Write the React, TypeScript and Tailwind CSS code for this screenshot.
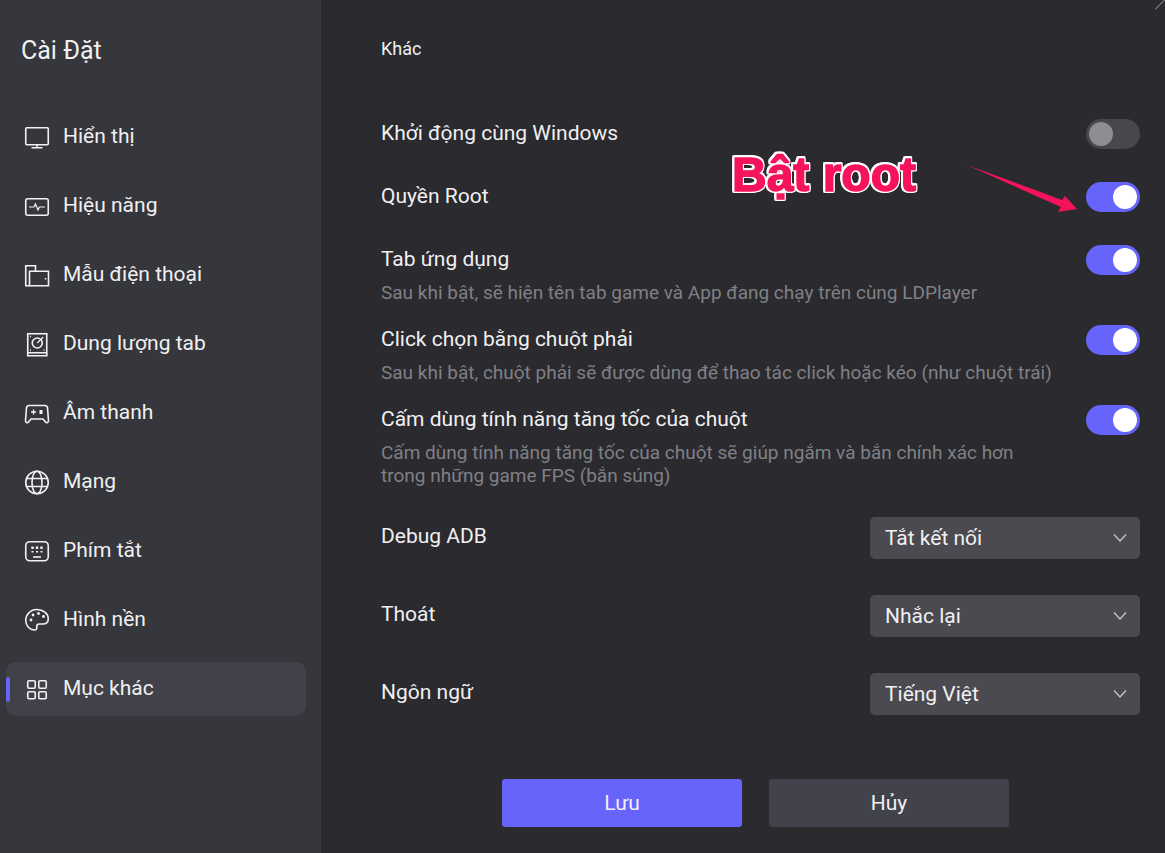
import { ReactNode } from "react";

const Svg = ({ children }: { children: ReactNode }) => (
  <svg
    viewBox="0 0 26 26"
    width="26"
    height="26"
    fill="none"
    stroke="#f2f2f4"
    strokeWidth="1.6"
    className="shrink-0"
  >
    {children}
  </svg>
);

const navItems: { label: string; icon: ReactNode; active?: boolean }[] = [
  {
    label: "Hiển thị",
    icon: (
      <Svg>
        <rect x="1.75" y="3.75" width="22.5" height="17" rx="1" />
        <path d="M13 21v2.5M7.5 23.75h11" />
      </Svg>
    ),
  },
  {
    label: "Hiệu năng",
    icon: (
      <Svg>
        <rect x="1.75" y="5.75" width="22.5" height="16.5" rx="2" />
        <path d="M5 14h5l1.5-3 2.5 6 1.5-3h5.5" strokeWidth="1.2" />
      </Svg>
    ),
  },
  {
    label: "Mẫu điện thoại",
    icon: (
      <Svg>
        <path d="M5.5 23.75H1.75V3.75H11.5V9" />
        <path d="M5.5 23.75V9.25H24.5V23.75Z" />
        <path d="M21.5 16v1.5" />
      </Svg>
    ),
  },
  {
    label: "Dung lượng tab",
    icon: (
      <Svg>
        <rect x="3.75" y="2.75" width="19" height="19" />
        <path d="M3.75 21.75v3h19v-3" />
        <circle cx="13.25" cy="12" r="5" />
        <path d="M13.25 12l6-6" strokeWidth="1.2" />
        <path d="M6 5.5h1M6 19h1M19.5 19h1" />
      </Svg>
    ),
  },
  {
    label: "Âm thanh",
    icon: (
      <Svg>
        <path d="M5 5.500h16c1.500 0 2.200.8 2.500 2.200l1 13c.1 1.800-1.800 2.600-3 1.300L19 19H7l-2.500 3c-1.200 1.300-3.100.5-3-1.300l1-13C2.800 6.300 3.500 5.500 5 5.500Z" />
        <path d="M7 12h5M9.500 9.500v5" strokeWidth="1.3" />
        <rect x="15.500" y="10" width="3" height="4" fill="#f2f2f4" stroke="none" />
      </Svg>
    ),
  },
  {
    label: "Mạng",
    icon: (
      <Svg>
        <circle cx="13" cy="13.500" r="11.250" />
        <ellipse cx="13" cy="13.500" rx="5" ry="11.250" />
        <path d="M2.500 9.500h21M2.500 17.500h21" />
      </Svg>
    ),
  },
  {
    label: "Phím tắt",
    icon: (
      <Svg>
        <rect x="1.750" y="3.750" width="22.500" height="19" rx="4" />
        <path d="M8.500 8.500v2.500M13 8.500v2.500M17.500 8.500v2.500" strokeWidth="2.400" />
        <path d="M8.500 13v1.500M13 13v1.500M17.500 13v1.500" strokeWidth="2" />
        <path d="M9 19h8" />
      </Svg>
    ),
  },
  {
    label: "Hình nền",
    icon: (
      <Svg>
        <path d="M13 2.500C6.500 2.500 1.750 7.500 1.750 13.500c0 5 3.500 9 8.500 9.500 2 .2 2.500-.8 2.500-2.200v-1.300c0-1.500 1-2.500 2.500-2.500h3.500c3.500 0 5.500-2 5.500-5 0-5.500-5.250-9.500-11.250-9.500Z" />
        <circle cx="7" cy="13" r="1.400" fill="#f2f2f4" stroke="none" />
        <circle cx="9" cy="8" r="1.400" fill="#f2f2f4" stroke="none" />
        <circle cx="14.500" cy="6.500" r="1.400" fill="#f2f2f4" stroke="none" />
        <circle cx="19.500" cy="9.500" r="1.400" fill="#f2f2f4" stroke="none" />
      </Svg>
    ),
  },
  {
    label: "Mục khác",
    active: true,
    icon: (
      <Svg>
        <rect x="3.750" y="4.750" width="7.500" height="7.500" rx="1.200" />
        <rect x="14.750" y="4.750" width="7.500" height="7.500" rx="1.200" />
        <rect x="3.750" y="15.750" width="7.500" height="7" rx="1.200" />
        <rect x="14.750" y="15.750" width="7.500" height="7" rx="1.200" />
      </Svg>
    ),
  },
];

function Toggle({ on = true }: { on?: boolean }) {
  return (
    <div
      className={`mt-px flex h-[30px] w-[54px] shrink-0 items-center rounded-full px-[3px] ${
        on ? "justify-end bg-[#6664fa]" : "justify-start bg-[#47474c]"
      }`}
    >
      <div className={`h-[24px] w-[24px] rounded-full ${on ? "bg-white" : "bg-[#8e8e91]"}`} />
    </div>
  );
}

function ToggleRow({
  label,
  desc,
  on,
  height,
}: {
  label: string;
  desc?: string[];
  on?: boolean;
  height: string;
}) {
  return (
    <div className={`flex items-start justify-between ${height}`}>
      <div>
        <div className="text-[21px] leading-[30px] text-[#f0f0f2]">{label}</div>
        {desc && (
          <div className="mt-[7px] text-[19px] leading-[23px] text-[#808085]">
            {desc.map((line) => (
              <div key={line}>{line}</div>
            ))}
          </div>
        )}
      </div>
      <Toggle on={on} />
    </div>
  );
}

function SelectRow({ label, value }: { label: string; value: string }) {
  return (
    <div className="flex h-[78px] items-start justify-between">
      <div className="text-[21px] leading-[38px] text-[#f0f0f2]">{label}</div>
      <div className="flex h-[42px] w-[270px] items-center justify-between rounded-[5px] bg-[#4a4a50] pl-[15px] pr-[13px] text-[21px] text-[#f0f0f2]">
        <span className="pt-px">{value}</span>
        <svg viewBox="0 0 14 10" width="14" height="10" fill="none" stroke="#c4c4c8" strokeWidth="1.4">
          <path d="M1 1.500l6 6.500 6-6.500" />
        </svg>
      </div>
    </div>
  );
}

export default function App() {
  return (
    <div className="relative flex h-[853px] w-[1165px] overflow-hidden bg-[#2a2a2f] font-['Roboto',sans-serif]">
      {/* Sidebar */}
      <aside className="h-full w-[321px] shrink-0 bg-[#36373c] pl-[6px] pr-[15px]">
        <div className="pl-[15px] pt-[34px] text-[25px] leading-[34px] text-[#f0f0f2]">Cài Đặt</div>
        <nav className="mt-[42px] flex flex-col gap-[15px]">
          {navItems.map((item) => (
            <div
              key={item.label}
              className={`relative flex h-[54px] items-center gap-[13px] rounded-[10px] pl-[18px] text-[21px] text-[#f0f0f2] ${
                item.active ? "bg-[#414249]" : ""
              }`}
            >
              {item.active && (
                <div className="absolute left-0 top-[15px] h-[25px] w-[4px] rounded-sm bg-[#6664fa]" />
              )}
              {item.icon}
              <span>{item.label}</span>
            </div>
          ))}
        </nav>
      </aside>

      {/* Content */}
      <main className="flex-1 pl-[60px] pr-[25px]">
        <div className="pt-[37px] text-[18px] leading-[24px] text-[#f0f0f2]">Khác</div>
        <div className="mt-[57px]">
          <ToggleRow label="Khởi động cùng Windows" on={false} height="h-[63px]" />
          <ToggleRow label="Quyền Root" height="h-[63px]" />
          <ToggleRow
            label="Tab ứng dụng"
            desc={["Sau khi bật, sẽ hiện tên tab game và App đang chạy trên cùng LDPlayer"]}
            height="h-[80px]"
          />
          <ToggleRow
            label="Click chọn bằng chuột phải"
            desc={["Sau khi bật, chuột phải sẽ được dùng để thao tác click hoặc kéo (như chuột trái)"]}
            height="h-[80px]"
          />
          <ToggleRow
            label="Cấm dùng tính năng tăng tốc của chuột"
            desc={[
              "Cấm dùng tính năng tăng tốc của chuột sẽ giúp ngắm và bắn chính xác hơn",
              "trong những game FPS (bắn súng)",
            ]}
            height="h-[113px]"
          />
        </div>
        <SelectRow label="Debug ADB" value="Tắt kết nối" />
        <SelectRow label="Thoát" value="Nhắc lại" />
        <SelectRow label="Ngôn ngữ" value="Tiếng Việt" />
        <div className="ml-[121px] mt-[28px] flex gap-[27px] text-[21px] text-[#f0f0f2]">
          <button className="h-[48px] w-[240px] rounded-[3px] bg-[#6664fa] pt-px">Lưu</button>
          <button className="h-[48px] w-[240px] rounded-[3px] bg-[#41424b] pt-px">Hủy</button>
        </div>
      </main>

      {/* Close corner */}
      <svg className="absolute right-0 top-0" width="10" height="10" viewBox="0 0 10 10" fill="none" stroke="#a9a9ad" strokeWidth="1">
        <path d="M0 9.500L9.500 0" />
      </svg>

      {/* Annotation */}
      <div className="absolute left-[732px] top-[147px] font-['Liberation_Sans',sans-serif] text-[48px] font-bold leading-[56px] text-[#f5145c] [-webkit-text-stroke:1.5px_#f5145c] [filter:drop-shadow(1.2px_0_0_white)_drop-shadow(-1.2px_0_0_white)_drop-shadow(0_1.2px_0_white)_drop-shadow(0_-1.2px_0_white)]">
        Bật root
      </div>
      <svg className="absolute left-[965px] top-[163px]" width="115" height="52" viewBox="0 0 115 52">
        <path d="M2 2L97 37L100 33L112 46L93 49L96 44Z" fill="#f5145c" />
      </svg>
    </div>
  );
}
